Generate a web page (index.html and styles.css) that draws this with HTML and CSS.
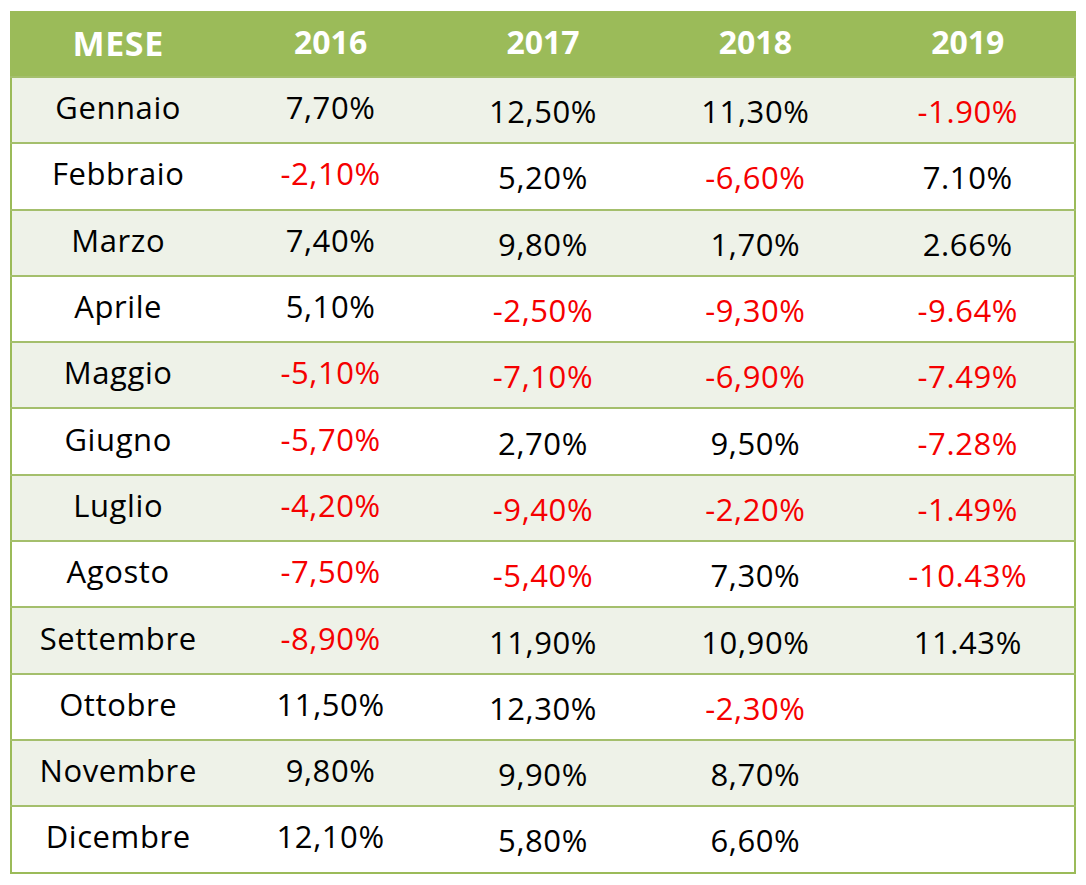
FILE: index.html
```html
<!DOCTYPE html>
<html lang="it">
<head>
<meta charset="utf-8">
<title>Rendimenti mensili</title>
<link rel="stylesheet" href="styles.css">
</head>
<body>
<table class="returns">
  <thead>
    <tr class="head-row">
      <th class="mese">MESE</th><th>2016</th><th>2017</th><th>2018</th><th>2019</th>
    </tr>
  </thead>
  <tbody>
    <tr class="band"><td class="m">Gennaio</td><td class="y16">7,70%</td><td>12,50%</td><td>11,30%</td><td class="neg">-1.90%</td></tr>
    <tr><td class="m">Febbraio</td><td class="y16 neg">-2,10%</td><td>5,20%</td><td class="neg">-6,60%</td><td>7.10%</td></tr>
    <tr class="band"><td class="m">Marzo</td><td class="y16">7,40%</td><td>9,80%</td><td>1,70%</td><td>2.66%</td></tr>
    <tr><td class="m">Aprile</td><td class="y16">5,10%</td><td class="neg">-2,50%</td><td class="neg">-9,30%</td><td class="neg">-9.64%</td></tr>
    <tr class="band"><td class="m">Maggio</td><td class="y16 neg">-5,10%</td><td class="neg">-7,10%</td><td class="neg">-6,90%</td><td class="neg">-7.49%</td></tr>
    <tr><td class="m">Giugno</td><td class="y16 neg">-5,70%</td><td>2,70%</td><td>9,50%</td><td class="neg">-7.28%</td></tr>
    <tr class="band"><td class="m">Luglio</td><td class="y16 neg">-4,20%</td><td class="neg">-9,40%</td><td class="neg">-2,20%</td><td class="neg">-1.49%</td></tr>
    <tr><td class="m">Agosto</td><td class="y16 neg">-7,50%</td><td class="neg">-5,40%</td><td>7,30%</td><td class="neg">-10.43%</td></tr>
    <tr class="band"><td class="m">Settembre</td><td class="y16 neg">-8,90%</td><td>11,90%</td><td>10,90%</td><td>11.43%</td></tr>
    <tr><td class="m">Ottobre</td><td class="y16">11,50%</td><td>12,30%</td><td class="neg">-2,30%</td><td></td></tr>
    <tr class="band"><td class="m">Novembre</td><td class="y16">9,80%</td><td>9,90%</td><td>8,70%</td><td></td></tr>
    <tr><td class="m">Dicembre</td><td class="y16">12,10%</td><td>5,80%</td><td>6,60%</td><td></td></tr>
  </tbody>
</table>
</body>
</html>
```
FILE: styles.css
```css
html, body {
  margin: 0;
  padding: 0;
  background: #ffffff;
}
body {
  padding: 11px 0 0 10px;
  font-family: "Open Sans", "Noto Sans", "Liberation Sans", sans-serif;
}
.returns {
  border-collapse: collapse;
  table-layout: fixed;
  width: 1066px;
  border-left: 2px solid #9bbb59;
  border-right: 2px solid #9bbb59;
  border-bottom: 2px solid #9bbb59;
}
.returns th,
.returns td {
  width: 20%;
  text-align: center;
  padding: 0;
  color: #000;
}
.head-row {
  background: #9bbb59;
  height: 66px;
}
.returns th {
  color: #fff;
  font-weight: 700;
  font-size: 32px;
  padding-bottom: 4px;
}
.returns th.mese {
  font-size: 34px;
  letter-spacing: 0.6px;
  padding-bottom: 2px;
}
.returns tbody tr {
  height: 66.3px;
  border-top: 2px solid #a4bf6c;
}
.returns td {
  font-size: 31px;
  letter-spacing: 0.6px;
  padding-top: 2px;
}
.returns td.m,
.returns td.y16 {
  padding-top: 0;
  padding-bottom: 6px;
}
.band {
  background: #eef2e8;
}
.returns td.neg {
  color: #f50000;
}
```
